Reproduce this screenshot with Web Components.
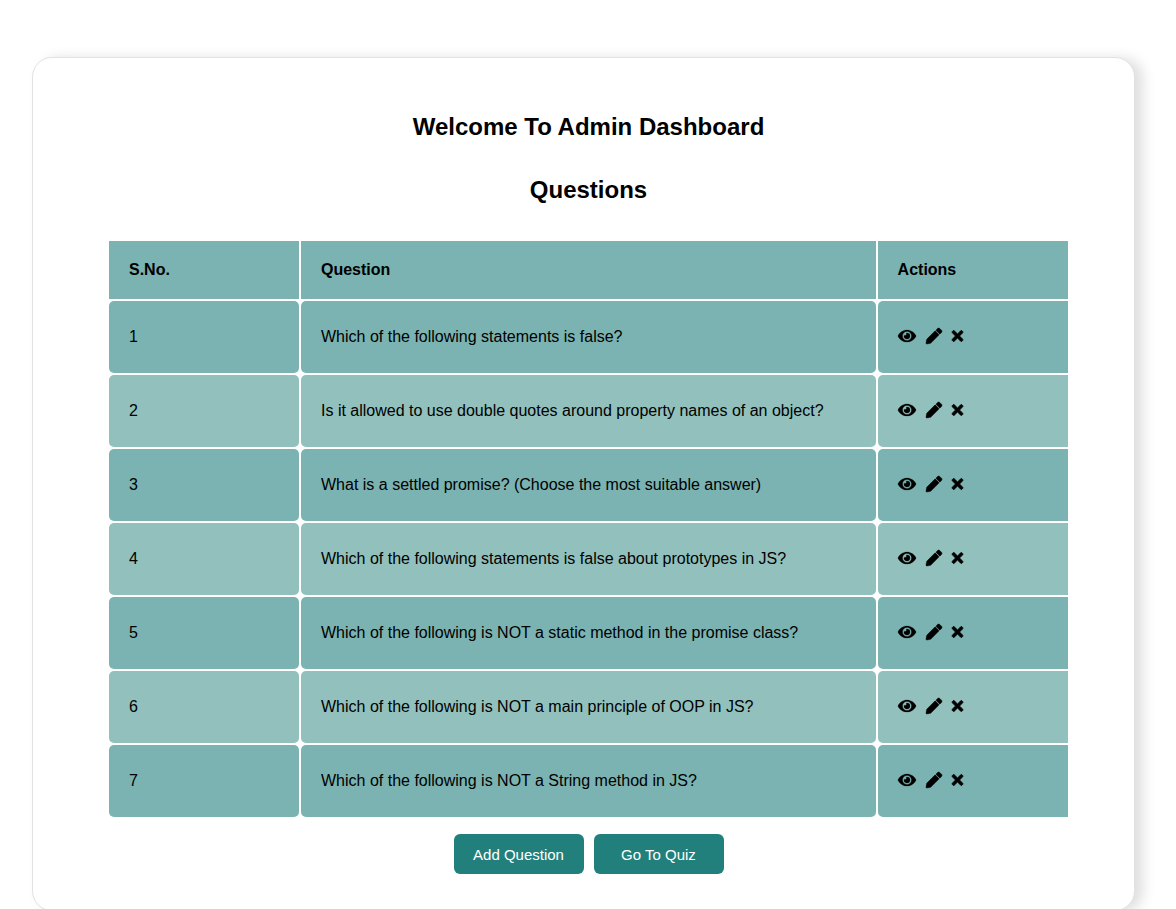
<!DOCTYPE html>
<html>
<head>
<meta charset="utf-8">
<title>Admin Dashboard</title>
<style>
html{height:909px;overflow:hidden;}
body{margin:0;height:909px;overflow:hidden;background:#fff;font-family:"Liberation Sans",Arial,sans-serif;color:#000;}
</style>
</head>
<body>
<admin-dashboard heading="Welcome To Admin Dashboard" subheading="Questions"></admin-dashboard>

<script>
const questions = [
  "Which of the following statements is false?",
  "Is it allowed to use double quotes around property names of an object?",
  "What is a settled promise? (Choose the most suitable answer)",
  "Which of the following statements is false about prototypes in JS?",
  "Which of the following is NOT a static method in the promise class?",
  "Which of the following is NOT a main principle of OOP in JS?",
  "Which of the following is NOT a String method in JS?"
];

//action icons
class ActionIcons extends HTMLElement {
  constructor() {
    super();
    this.attachShadow({ mode: "open" }).innerHTML = `
      <style>
        :host{display:flex;align-items:center;padding-bottom:2px;}
        svg{display:block;height:16px;fill:#000;stroke:#000;overflow:visible;}
        .eye{width:18px;margin-right:10px;stroke-width:8;}
        .pen{width:16px;margin-right:10px;stroke-width:14;}
        .del{width:11px;stroke-width:22;}
      </style>
      <svg class="eye" viewBox="0 0 576 512"><path d="M572.52 241.4C518.29 135.59 407.81 64 288 64S57.68 135.64 3.48 241.41a32.35 32.35 0 0 0 0 29.19C57.71 376.41 168.19 448 288 448s230.32-71.64 284.52-177.41a32.35 32.35 0 0 0 0-29.19zM288 400a144 144 0 1 1 144-144 143.93 143.93 0 0 1-144 144zm0-240a95.31 95.31 0 0 0-25.31 3.79 47.85 47.85 0 0 1-66.9 66.9A95.78 95.78 0 1 0 288 160z"/></svg>
      <svg class="pen" viewBox="0 0 512 512"><path d="M497.9 142.1l-46.1 46.1c-4.7 4.7-12.3 4.7-17 0l-111-111c-4.7-4.7-4.7-12.3 0-17l46.1-46.1c18.7-18.7 49.1-18.7 67.9 0l60.1 60.1c18.8 18.7 18.8 49.1 0 67.9zM284.2 99.8L21.6 362.4.4 483.9c-2.9 16.4 11.4 30.6 27.8 27.8l121.5-21.3 262.6-262.6c4.7-4.7 4.7-12.3 0-17l-111-111c-4.8-4.7-12.4-4.7-17.1 0z"/></svg>
      <svg class="del" viewBox="0 0 352 512"><path d="M242.72 256l100.07-100.07c12.28-12.28 12.28-32.19 0-44.48l-22.24-22.24c-12.28-12.28-32.19-12.28-44.48 0L176 189.28 75.93 89.21c-12.28-12.28-32.19-12.28-44.48 0L9.21 111.45c-12.28 12.28-12.28 32.19 0 44.48L109.28 256 9.21 356.07c-12.28 12.28-12.28 32.19 0 44.48l22.24 22.24c12.28 12.28 32.2 12.28 44.48 0L176 322.72l100.07 100.07c12.28 12.28 32.2 12.28 44.48 0l22.24-22.24c12.28-12.28 12.28-32.19 0-44.48L242.72 256z"/></svg>
    `;
  }
}
customElements.define("action-icons", ActionIcons);

//one table row, three cells
class QuestionRow extends HTMLElement {
  constructor() {
    super();
    this.attachShadow({ mode: "open" }).innerHTML = `
      <style>
        :host{display:grid;grid-template-columns:190px 574.6px 190.4px;column-gap:2px;font-size:16px;line-height:18px;}
        .cell{display:flex;align-items:center;height:72px;padding-left:20px;box-sizing:border-box;border-radius:5px;background:#7ab3b1;}
        .cell:last-child{border-radius:5px 0 0 5px;}
        :host([even]) .cell{background:#91c0bd;}
        :host([head]) .cell{height:58px;border-radius:0;font-weight:bold;}
      </style>
      <div class="cell"><slot name="no"></slot></div>
      <div class="cell"><slot name="text"></slot></div>
      <div class="cell"><slot name="actions"></slot></div>
    `;
  }
}
customElements.define("question-row", QuestionRow);

//rounded teal button
class DashButton extends HTMLElement {
  constructor() {
    super();
    this.attachShadow({ mode: "open" }).innerHTML = `
      <style>
        :host{display:flex;align-items:center;justify-content:center;width:130px;height:40px;border-radius:6px;background:#21807b;color:#fff;font-size:15px;}
      </style>
      <slot></slot>
    `;
  }
}
customElements.define("dash-button", DashButton);

//page card
class AdminDashboard extends HTMLElement {
  constructor() {
    super();
    this.attachShadow({ mode: "open" }).innerHTML = `
      <style>
        :host{display:block;padding-top:57px;}
        .card{width:1103px;height:854px;margin-left:32px;box-sizing:border-box;border:1px solid #e2e2e2;border-radius:20px;background:#fff;box-shadow:8px 1px 13px rgba(0,0,0,.13);padding:55px 66px 0 76px;}
        h1{margin:0;font-size:24px;line-height:28px;font-weight:bold;text-align:center;}
        h1 + h1{margin-top:35px;}
        .table{display:flex;flex-direction:column;row-gap:2px;margin-top:37px;width:959px;}
        .buttons{display:flex;justify-content:center;column-gap:10px;margin-top:17px;}
      </style>
      <div class="card">
        <h1>${this.getAttribute("heading")}</h1>
        <h1>${this.getAttribute("subheading")}</h1>
        <div class="table" id="table">
          <question-row head>
            <span slot="no">S.No.</span>
            <span slot="text">Question</span>
            <span slot="actions">Actions</span>
          </question-row>
        </div>
        <div class="buttons">
          <dash-button>Add Question</dash-button>
          <dash-button>Go To Quiz</dash-button>
        </div>
      </div>
    `;
    const table = this.shadowRoot.querySelector("#table");
    questions.forEach((q, i) => {
      const row = document.createElement("question-row");
      if (i % 2) row.setAttribute("even", "");
      row.innerHTML = `<span slot="no">${i + 1}</span><span slot="text">${q}</span><action-icons slot="actions"></action-icons>`;
      table.appendChild(row);
    });
  }
}
customElements.define("admin-dashboard", AdminDashboard);
</script>
</body>
</html>
